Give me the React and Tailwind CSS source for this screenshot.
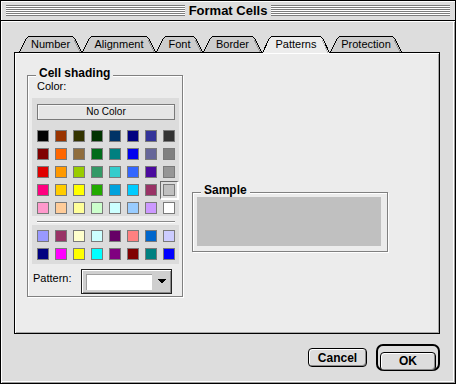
import React from 'react';

const tabs = [
  { label: 'Number', w: 63 },
  { label: 'Alignment', w: 74 },
  { label: 'Font', w: 47 },
  { label: 'Border', w: 59 },
  { label: 'Patterns', w: 68, selected: true },
  { label: 'Protection', w: 72 },
];

const mainColors = [
  'bg-[#000000]', 'bg-[#993300]', 'bg-[#333300]', 'bg-[#003300]', 'bg-[#003366]', 'bg-[#000080]', 'bg-[#333399]', 'bg-[#333333]',
  'bg-[#800000]', 'bg-[#ff6600]', 'bg-[#8f6d3d]', 'bg-[#006b1a]', 'bg-[#008080]', 'bg-[#0000ee]', 'bg-[#666699]', 'bg-[#808080]',
  'bg-[#e00000]', 'bg-[#ff9900]', 'bg-[#99cc00]', 'bg-[#339966]', 'bg-[#33cccc]', 'bg-[#3366ff]', 'bg-[#4b0a9e]', 'bg-[#969696]',
  'bg-[#ff0080]', 'bg-[#ffcc00]', 'bg-[#ffff00]', 'bg-[#22aa00]', 'bg-[#00a2dd]', 'bg-[#00ccff]', 'bg-[#993366]', 'bg-[#c0c0c0]',
  'bg-[#ff99cc]', 'bg-[#ffcc99]', 'bg-[#ffff99]', 'bg-[#ccffcc]', 'bg-[#ccffff]', 'bg-[#99ccff]', 'bg-[#cc99ff]', 'bg-[#ffffff]',
];

const extraColors = [
  'bg-[#9999ff]', 'bg-[#993366]', 'bg-[#ffffcc]', 'bg-[#ccffff]', 'bg-[#660066]', 'bg-[#ff8080]', 'bg-[#0066cc]', 'bg-[#ccccff]',
  'bg-[#000080]', 'bg-[#ff00ff]', 'bg-[#ffff00]', 'bg-[#00ffff]', 'bg-[#800080]', 'bg-[#800000]', 'bg-[#008080]', 'bg-[#0000ff]',
];

function Tab({ label, w, selected }) {
  const h = selected ? 17 : 16;
  const fillPath = `M0,${h} L6,4 Q7.5,0 11,0 L${w - 11},0 Q${w - 7.5},0 ${w - 6},4 L${w},${h} Z`;
  const outline = `M0.5,${h} L6.5,4 Q8,0.5 11,0.5 L${w - 11},0.5 Q${w - 8},0.5 ${w - 6.5},4 L${w - 0.5},${h}`;
  const shade = `M${w - 7.5},4.5 L${w - 2},${h}`;
  return (
    <div
      className={`relative flex items-center justify-center text-[11px] leading-none ${
        selected ? 'h-[17px] -mb-px z-10' : 'h-[16px]'
      }`}
      style={{ width: w }}
    >
      <svg className="absolute inset-0" width={w} height={h} shapeRendering="crispEdges">
        <path d={fillPath} fill={selected ? '#ececec' : '#cdcdcd'} />
        <path d={shade} stroke={selected ? '#b8b8b8' : '#999999'} fill="none" />
        <path d={outline} stroke="#000" fill="none" />
      </svg>
      <span className={`relative ${selected ? 'mb-px' : ''}`}>{label}</span>
    </div>
  );
}

function Swatch({ color, selected }) {
  return (
    <div className="relative w-[12px] h-[12px]">
      {selected && (
        <div className="absolute -left-[3px] -top-[3px] w-[19px] h-[19px] border-l border-t border-[#6a6a6a] border-r-2 border-b-2 border-r-white border-b-white" />
      )}
      <div className={`relative w-[12px] h-[12px] border border-[#7a7a7a] ${color}`} />
    </div>
  );
}

function GroupBox({ title, className, children }) {
  return (
    <div
      className={`relative border border-[#808080] shadow-[1px_1px_0_#ffffff,inset_1px_1px_0_#ffffff] ${className}`}
    >
      <div className="absolute left-[8px] -top-[10px] px-[3px] bg-[#ececec] text-[12px] font-bold leading-[14px]">
        {title}
      </div>
      {children}
    </div>
  );
}

export default function App() {
  return (
    <div className="w-[456px] h-[384px] border border-black bg-[#dddddd] flex flex-col font-['Liberation_Sans',Arial,sans-serif] text-black select-none">
      {/* Title bar */}
      <div className="h-[20px] shrink-0 border-b border-black flex items-center px-[5px] shadow-[inset_1px_1px_0_#ffffff]">
        <div className="flex-1 h-[11px] bg-[repeating-linear-gradient(to_bottom,#7c7c7c_0_1px,#ffffff_1px_2px)]" />
        <div className="px-[4px] text-[13px] font-bold leading-none">Format Cells</div>
        <div className="flex-1 h-[11px] bg-[repeating-linear-gradient(to_bottom,#7c7c7c_0_1px,#ffffff_1px_2px)]" />
      </div>

      {/* Body */}
      <div className="flex-1 pt-[15px] shadow-[inset_1px_1px_0_#ffffff,inset_-1px_-1px_0_#9a9a9a,inset_-2px_-2px_0_#ffffff]">
        {/* Tabs */}
        <div className="flex items-end h-[16px] ml-[18px]">
          {tabs.map((t) => (
            <Tab key={t.label} {...t} />
          ))}
        </div>

        {/* Panel */}
        <div className="ml-[13px] w-[426px] h-[282px] border border-black bg-[#ececec] shadow-[inset_1px_1px_0_#ffffff,inset_-1px_-1px_0_#a8a8a8] flex items-start pt-[22px] pl-[12px] gap-[9px]">
          <GroupBox title="Cell shading" className="w-[156px] h-[222px] px-[4px]">
            <div className="mt-[4px] pl-[5px] text-[11px] leading-[13px]">Color:</div>

            <div className="mt-[5px] w-[147px] bg-[#dcdcdc] pt-[6px] pl-[5px] pb-[2px]">
              <div className="w-[138px] h-[16px] border border-[#7a7a7a] bg-[#e6e6e6] shadow-[inset_1px_1px_0_#f6f6f6] flex items-center justify-center text-[10px] leading-none">
                No Color
              </div>
              <div className="mt-[10px] grid grid-cols-[repeat(8,12px)] gap-[6px]">
                {mainColors.map((c, i) => (
                  <Swatch key={i} color={c} selected={i === 31} />
                ))}
              </div>
            </div>

            <div className="mt-[5px] ml-[5px] w-[138px] h-[2px] border-t border-[#8a8a8a] border-b border-b-white" />

            <div className="mt-[2px] w-[147px] bg-[#dcdcdc] pt-[5px] pl-[5px] pb-[4px]">
              <div className="grid grid-cols-[repeat(8,12px)] gap-[6px]">
                {extraColors.map((c, i) => (
                  <Swatch key={i} color={c} />
                ))}
              </div>
            </div>

            <div className="mt-[5px] flex items-start">
              <div className="w-[49px] pl-[1px] mt-[3px] text-[11px] leading-[13px]">Pattern:</div>
              <div className="w-[91px] h-[25px] border border-[#222222] bg-[#cfcfcf] shadow-[inset_1px_1px_0_#ffffff,inset_-1px_-1px_0_#8a8a8a] flex items-center pl-[4px]">
                <div className="w-[66px] h-[16px] bg-white border-t border-l border-[#a0a0a0]" />
                <div className="flex-1 flex justify-center">
                  <svg width="8" height="5" viewBox="0 0 8 5" shapeRendering="crispEdges">
                    <path d="M0 0 H8 L4 5 Z" fill="#000" />
                  </svg>
                </div>
              </div>
            </div>
          </GroupBox>

          <GroupBox title="Sample" className="w-[196px] h-[60px] mt-[117px]">
            <div className="ml-[4px] mt-[4px] w-[184px] h-[49px] bg-[#c0c0c0]" />
          </GroupBox>
        </div>

        {/* Buttons */}
        <div className="mt-[10px] ml-[13px] w-[426px] flex justify-end items-center gap-[9px]">
          <button className="w-[59px] h-[19px] rounded-[4px] border border-black bg-[#dddddd] shadow-[inset_1px_1px_0_#ffffff,inset_-1px_-1px_0_#8a8a8a] text-[12px] font-bold leading-none">
            Cancel
          </button>
          <div className="w-[64px] h-[27px] rounded-[7px] border-2 border-black p-[2px] bg-[#dddddd]">
            <button className="w-full h-full rounded-[4px] border border-black bg-[#dddddd] shadow-[inset_1px_1px_0_#ffffff,inset_-1px_-1px_0_#8a8a8a] text-[12px] font-bold leading-none">
              OK
            </button>
          </div>
        </div>
      </div>
    </div>
  );
}
